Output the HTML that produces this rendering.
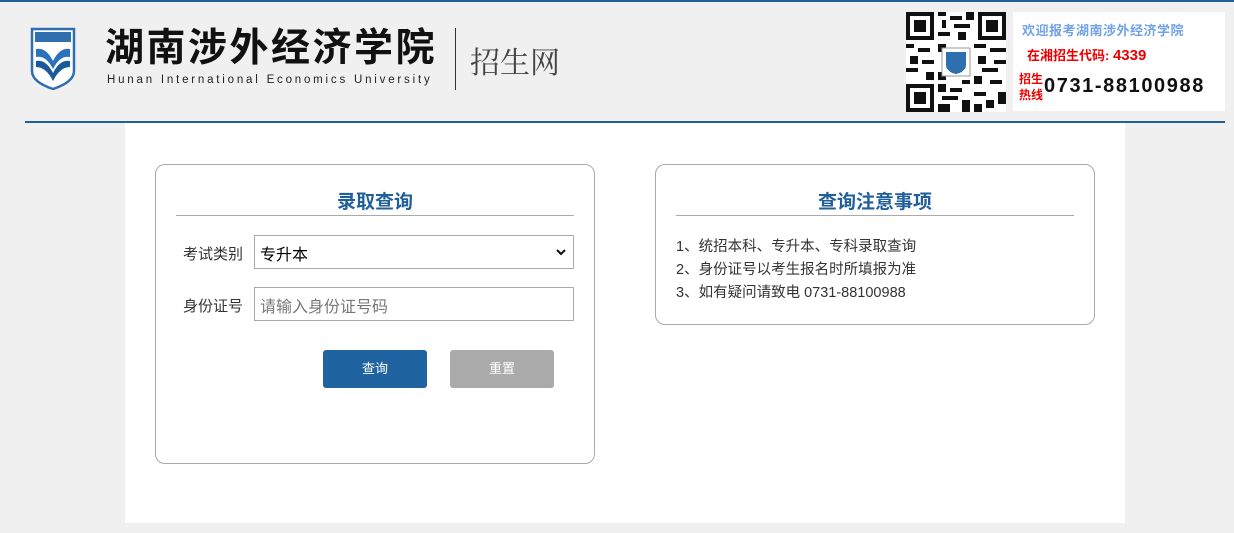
<!DOCTYPE html>
<html><head><meta charset="utf-8"><style>
*{margin:0;padding:0;box-sizing:border-box}
body{width:1234px;height:533px;background:#f0f0f0;font-family:"Liberation Sans","Noto Sans CJK SC",sans-serif;position:relative;overflow:hidden}
.a{position:absolute}
.box{position:absolute;border:1px solid #aaa;border-radius:10px;background:#fff}
.t{position:absolute;left:20px;right:20px;text-align:center;font-size:19px;font-weight:bold;color:#1f5f9a;border-bottom:1px solid #aaa;height:51px;top:0;padding-top:22px}
.lab{position:absolute;font-size:15px;color:#333}
.fld{position:absolute;border:1px solid #aaa;background:#fff;font-size:16px;padding:5px 5px;height:34px}
.btn{position:absolute;width:104px;height:38px;border-radius:3px;color:#fff;font-size:13px;text-align:center;line-height:38px}
</style></head><body>
<div class="a" style="left:0;top:0;width:1234px;height:2px;background:#1f5f9a"></div>
<svg class="a" style="left:30px;top:27px" width="46" height="63" viewBox="0 0 46 63">
<path d="M2 2H44V44Q44 55 23 62Q2 55 2 44Z" fill="#fff" stroke="#2e6fb0" stroke-width="2.5"/>
<rect x="5" y="5" width="36" height="10" fill="#2e6fb0"/>
<path d="M6 22Q16 20 23 34Q30 20 40 22V30Q30 28 23 42Q16 28 6 30Z" fill="#2a73bb"/>
<path d="M6 34Q16 32 23 46Q30 32 40 34V40Q30 40 23 54Q16 40 6 40Z" fill="#1b5a9a"/>
</svg>
<div class="a" style="left:105px;top:26px;font-size:39px;font-weight:bold;color:#111;letter-spacing:2.5px;line-height:46px">湖南涉外经济学院</div>
<div class="a" style="left:107px;top:74px;font-size:11.5px;color:#222;letter-spacing:2.8px">Hunan International Economics University</div>
<div class="a" style="left:455px;top:28px;width:1px;height:62px;background:#333"></div>
<div class="a" style="left:470px;top:38px;font-size:30px;color:#444;font-family:'Noto Serif CJK SC',serif">招生网</div>
<svg class="a" style="left:906px;top:12px" width="100" height="100" viewBox="0 0 25 25" shape-rendering="crispEdges">
<rect width="25" height="25" fill="#fff"/>
<g fill="#111"><path d="M0 0h7v7h-7zM18 0h7v7h-7zM0 18h7v7h-7z"/></g>
<g fill="#fff"><path d="M1 1h5v5h-5zM19 1h5v5h-5zM1 19h5v5h-5z"/></g>
<g fill="#111"><path d="M2 2h3v3h-3zM20 2h3v3h-3zM2 20h3v3h-3z"/>
<path d="M8 0h2v1h-2zM11 1h3v1h-3zM9 2h1v2h-1zM12 3h4v1h-4zM15 0h2v2h-2zM8 5h3v1h-3zM13 5h2v2h-2zM0 8h2v1h-2zM3 9h3v1h-3zM1 11h2v2h-2zM4 12h3v1h-3zM0 14h3v1h-3zM5 15h2v2h-2zM8 8h2v2h-2zM17 8h3v1h-3zM21 9h4v1h-4zM18 11h2v2h-2zM22 12h3v1h-3zM19 14h4v1h-4zM17 16h2v2h-2zM21 17h3v1h-3zM8 18h2v2h-2zM11 19h3v1h-3zM9 21h4v1h-4zM14 22h2v3h-2zM17 20h3v1h-3zM20 22h2v2h-2zM23 20h2v3h-2zM8 23h3v2h-3zM17 23h2v2h-2zM8 15h2v2h-2zM14 17h2v1h-2zM12 15h1v1h-1zM15 9h1v2h-1z"/></g>
<rect x="9" y="9" width="7" height="7" fill="#fff" stroke="#999" stroke-width=".3"/>
<path d="M10 10h5v3Q15 15 12.5 15.5Q10 15 10 13z" fill="#2e6fb0"/>
</svg>
<div class="a" style="left:1013px;top:12px;width:212px;height:99px;background:#fff"></div>
<div class="a" style="left:1022px;top:20px;font-size:13px;font-weight:bold;color:#6fa2e8;letter-spacing:.5px">欢迎报考湖南涉外经济学院</div>
<div class="a" style="left:1027px;top:45px;font-size:13px;font-weight:bold;color:#e00">在湘招生代码: <span style="font-size:15px">4339</span></div>
<div class="a" style="left:1019px;top:71px;font-size:12px;font-weight:bold;color:#e00;line-height:16px">招生<br>热线</div>
<div class="a" style="left:1044px;top:75px;font-size:20px;font-weight:bold;color:#111;letter-spacing:1.6px">0731-88100988</div>
<div class="a" style="left:25px;top:121px;width:1200px;height:2px;background:#1f5f9a"></div>
<div class="a" style="left:125px;top:123px;width:1000px;height:400px;background:#fff"></div>
<div class="box" style="left:155px;top:164px;width:440px;height:300px">
<div class="t">录取查询</div>
<div class="lab" style="left:27px;top:78px">考试类别</div>
<div class="fld" style="left:98px;top:70px;width:320px;color:#000">专升本<svg style="position:absolute;right:7px;top:12px" width="10" height="8" viewBox="0 0 10 8"><path d="M1 2L5 6L9 2" fill="none" stroke="#111" stroke-width="2"/></svg></div>
<div class="lab" style="left:27px;top:130px">身份证号</div>
<div class="fld" style="left:98px;top:122px;width:320px;color:#777">请输入身份证号码</div>
<div class="btn" style="left:167px;top:185px;background:#1f64a0">查询</div>
<div class="btn" style="left:294px;top:185px;background:#aaa">重置</div>
</div>
<div class="box" style="left:655px;top:164px;width:440px;height:161px">
<div class="t">查询注意事项</div>
<div class="lab" style="left:20px;top:71px;line-height:23px;font-size:14.5px">1、统招本科、专升本、专科录取查询<br>2、身份证号以考生报名时所填报为准<br>3、如有疑问请致电 0731-88100988</div>
</div>
</body></html>
